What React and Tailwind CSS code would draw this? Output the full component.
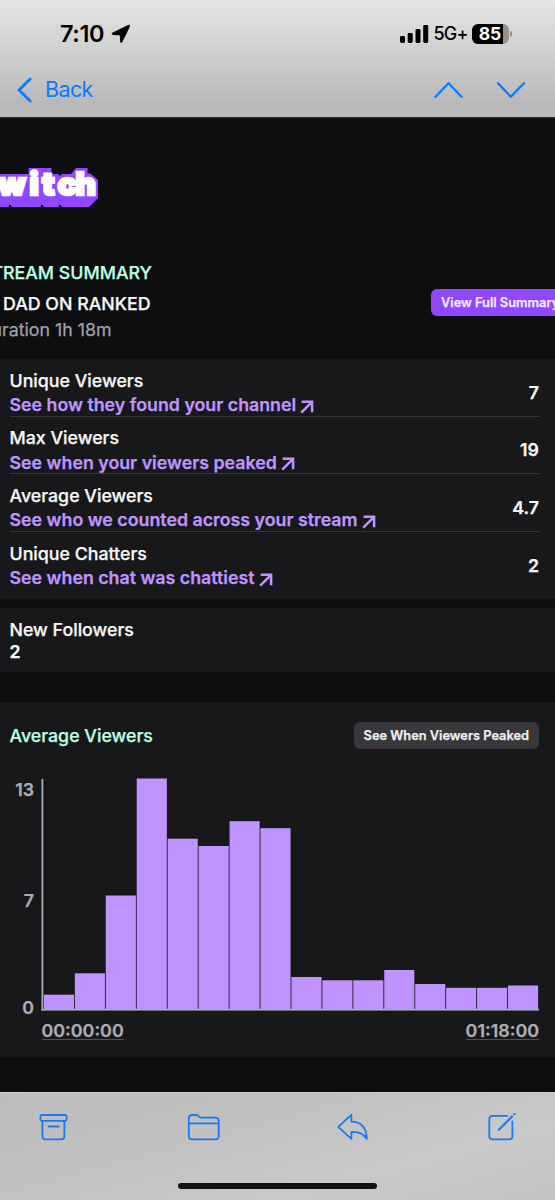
const stats = [
  {
    label: "Unique Viewers",
    link: "See how they found your channel",
    value: "7",
  },
  {
    label: "Max Viewers",
    link: "See when your viewers peaked",
    value: "19",
  },
  {
    label: "Average Viewers",
    link: "See who we counted across your stream",
    value: "4.7",
  },
  {
    label: "Unique Chatters",
    link: "See when chat was chattiest",
    value: "2",
  },
];

// Bar heights in pixels, one bar per interval of the stream
const bars = [
  14.3, 35.7, 113.5, 230.5, 170.3, 163, 187.8, 180.8, 32, 28.7, 28.7, 39, 25,
  21.2, 21.2, 23.5,
];
const BAR_STEP = 30.94;

const StatusBar = () => (
  <div className="flex h-[67px] items-center pl-[60px] pr-[43px] text-black">
    <span className="text-[23.5px] leading-none font-semibold tracking-[-0.4px]">
      7:10
    </span>
    <svg className="ml-[7px]" width="20" height="20" viewBox="0 0 19 19">
      <path
        d="M1.2 8.2 L16.2 .9 Q18.5 .2 17.9 2.5 L10.8 17 Q9.2 18.9 8.6 16.6 L8.4 11.2 Q8.3 10.6 7.8 10.6 L2 10.4 Q-.4 9.4 1.2 8.2Z"
        fill="currentColor"
      />
    </svg>

    <div className="ml-auto flex items-center">
      <svg width="29" height="18" viewBox="0 0 29 18" fill="currentColor">
        <rect x="0" y="11" width="5" height="7" rx="1.4" />
        <rect x="7.7" y="8" width="5" height="10" rx="1.4" />
        <rect x="15.5" y="4" width="5" height="14" rx="1.4" />
        <rect x="23.2" y="0" width="5" height="18" rx="1.4" />
      </svg>
      <span className="ml-[5px] w-[33px] text-[18px] leading-none font-medium tracking-[-0.8px] whitespace-nowrap">
        5G+
      </span>
      <div className="ml-[5px] flex items-center">
        <div className="flex h-[20px] w-[37px] items-center overflow-hidden rounded-[6px] bg-linear-to-r from-black from-[84%] to-[#929292] to-[84%]">
          <span className="w-full text-center text-[17.5px] leading-none font-bold text-white">
            85
          </span>
        </div>
        <div className="ml-[1.5px] h-[6px] w-[2px] rounded-r-full bg-[#929292]" />
      </div>
    </div>
  </div>
);

const NavBar = () => (
  <div className="flex h-[50px] items-center pl-[16px] pr-[29px] pb-[5px] text-[#0a7aff]">
    <svg
      width="17"
      height="26"
      viewBox="0 0 17 26"
      fill="none"
      stroke="currentColor"
      strokeWidth="2.8"
      strokeLinecap="round"
      strokeLinejoin="round"
    >
      <path d="M14.2 2 L3 13 L14.2 24" />
    </svg>
    <span className="ml-[12px] text-[21.5px] leading-none tracking-[-0.6px]">
      Back
    </span>
    <svg
      className="ml-auto"
      width="30"
      height="18"
      viewBox="0 0 30 18"
      fill="none"
      stroke="currentColor"
      strokeWidth="2.3"
      strokeLinecap="round"
      strokeLinejoin="round"
    >
      <path d="M2.5 15.8 L15.5 2.2 L28.5 15.8" />
    </svg>
    <svg
      className="ml-[33px]"
      width="30"
      height="18"
      viewBox="0 0 30 18"
      fill="none"
      stroke="currentColor"
      strokeWidth="2.3"
      strokeLinecap="round"
      strokeLinejoin="round"
    >
      <path d="M2 2.2 L14.8 15.8 L28 2.2" />
    </svg>
  </div>
);

const TwitchLogo = () => (
  <svg
    className="block overflow-hidden"
    width="100"
    height="42"
    viewBox="0 0 100 42"
  >
    <path
      d="M0 7 H28.5 V1 H51.5 V7 H58 L60 9 L62 7 H71 L76 1 H87.5 V6 L91 7 L98 13 V31 L89 40 H62.5 L59 37 V40 H44.5 L41 37 V40 H12.5 L9 37 V40 H0 Z"
      fill="#9147ff"
    />
    <text
      x="-20 -2 29.4 42 57.6 75.6"
      y="27.6"
      fill="#fff"
      stroke="#fff"
      strokeWidth="2.6"
      strokeLinejoin="miter"
      fontSize="31.5"
      fontWeight="900"
      fontFamily="Inter, sans-serif"
    >
      twitch
    </text>
  </svg>
);

const ArrowUpRight = () => (
  <svg
    className="mt-[2.5px] ml-[4px] shrink-0"
    width="14"
    height="14"
    viewBox="0 0 14 14"
    fill="none"
    stroke="currentColor"
    strokeWidth="2.5"
  >
    <path d="M1.6 1.8 H12.1 V12.3 M12.1 1.8 L1.2 12.7" />
  </svg>
);

const StreamHeader = () => (
  <section className="h-[101px] pt-[3px] leading-none whitespace-nowrap">
    <h1 className="flex h-[24px] w-[152px] items-center justify-end text-[17.8px] font-medium text-[#beffe3]">
      STREAM SUMMARY
    </h1>
    <div className="flex">
      <div>
        <h2 className="flex h-[37px] w-[150.5px] items-center justify-end text-[17.8px] font-medium text-[#f7f7f8]">
          DAD ON RANKED
        </h2>
        <p className="flex h-[15px] w-[111.5px] items-center justify-end text-[17.8px] text-[#a0a0aa]">
          Duration 1h 18m
        </p>
      </div>
      <button className="mt-[4px] ml-[280.5px] h-[27px] shrink-0 rounded-[6px] bg-[#9147ff] px-[10px] pt-px text-[12.8px] font-semibold text-[#f3eaff]">
        View Full Summary
      </button>
    </div>
  </section>
);

const StatRow = ({ label, link, value, last }) => (
  <div
    className={`flex h-[57.5px] items-center pt-[12px] ${
      last ? "" : "border-b border-[#36363b]"
    }`}
  >
    <div className="text-[17.8px] leading-[24.5px]">
      <div className="font-medium text-[#f7f7f8]">{label}</div>
      <a className="flex items-center font-semibold text-[#bf94ff]">
        {link}
        <ArrowUpRight />
      </a>
    </div>
    <span className="ml-auto text-[17.8px] font-semibold text-[#f7f7f8]">
      {value}
    </span>
  </div>
);

const ViewersChart = () => (
  <div className="flex">
    <div className="flex w-[34px] flex-col text-right text-[17.8px] leading-[20px] font-semibold text-[#adadb8]">
      <span className="mt-[2px]">13</span>
      <span className="mt-[91px]">7</span>
      <span className="mt-[87px]">0</span>
    </div>
    <div className="ml-[7px]">
      <svg className="block" width="499" height="234" viewBox="0 0 499 234">
        {bars.map((height, i) => (
          <rect
            key={i}
            x={2.9 + i * BAR_STEP}
            y={231 - height}
            width={30.1}
            height={height}
            fill="#bf94ff"
          />
        ))}
        <rect x="0.5" y="1" width="1.8" height="231.5" fill="#adadb8" />
        <rect x="0.5" y="230.8" width="497.5" height="1.8" fill="#adadb8" />
      </svg>
      <div className="flex w-[498px] justify-between pt-[11px] pl-[0.5px] text-[17.9px] leading-[16px] font-semibold text-[#adadb8]">
        <span className="border-b border-[#505058]">00:00:00</span>
        <span className="border-b border-[#505058]">01:18:00</span>
      </div>
    </div>
  </div>
);

const Toolbar = () => (
  <footer className="h-[108px] border-t border-[#d0d0d0] bg-[linear-gradient(165deg,#bcbcbd_0%,#c0c0c1_35%,#c9c9cb_70%,#c2c2c4_100%)]">
    <div className="flex h-[70px] items-center justify-between px-[38px] text-[#177cf0]">
      <svg
        width="31"
        height="30"
        viewBox="0 0 31 30"
        fill="none"
        stroke="currentColor"
        strokeWidth="1.8"
        strokeLinecap="round"
      >
        <rect x="2.4" y="2" width="26.2" height="5.8" rx="1.6" />
        <path d="M4.4 8 V23 Q4.4 26.4 7.8 26.4 H23 Q26.4 26.4 26.4 23 V8" />
        <path d="M10.5 13.4 H20.5" strokeWidth="2" />
      </svg>
      <svg
        width="33"
        height="30"
        viewBox="0 0 33 30"
        fill="none"
        stroke="currentColor"
        strokeWidth="1.8"
        strokeLinejoin="round"
      >
        <path d="M1.8 23 V5.2 Q1.8 2 5 2 H9 Q10.4 2 11.4 2.9 L12.4 3.8 Q13.3 4.7 14.7 4.7 H28.3 Q31.7 4.7 31.7 8 V23 Q31.7 26.4 28.3 26.4 H5.2 Q1.8 26.4 1.8 23Z M1.8 10.4 H31.7" />
      </svg>
      <svg
        width="32"
        height="30"
        viewBox="0 0 32 30"
        fill="none"
        stroke="currentColor"
        strokeWidth="1.8"
        strokeLinejoin="round"
      >
        <path d="M1.2 13.8 L14.4 1.8 V8.6 C24.5 8.6 29.8 15.5 29.8 26 C26.5 20.6 22.5 18.8 14.4 18.8 V25.8 Z" />
      </svg>
      <svg
        width="30"
        height="30"
        viewBox="0 0 30 30"
        fill="none"
        stroke="currentColor"
        strokeWidth="1.8"
        strokeLinecap="round"
      >
        <path d="M20.3 2.8 H5.7 Q2.3 2.8 2.3 6.2 V23 Q2.3 26.4 5.7 26.4 H22 Q25.4 26.4 25.4 23 V8.5" />
        <path d="M11.8 16.8 L25.2 3.4" strokeWidth="2.2" />
        <path d="M27.4 1.1 L27.6 .9" strokeWidth="2.2" />
      </svg>
    </div>
    <div className="mx-auto mt-[20px] h-[6px] w-[199px] rounded-full bg-[#111]" />
  </footer>
);

const App = () => {
  return (
    <div className="flex h-[1200px] w-[555px] flex-col overflow-hidden bg-[#0e0e10] font-[Inter,sans-serif]">
      <header className="h-[118px] shrink-0 border-b border-[#333] bg-linear-to-b from-[#e5e4e3] via-[#cdcdce] via-50% to-[#b8b8b9] to-90%">
        <StatusBar />
        <NavBar />
      </header>

      <main className="h-[974px] [-webkit-text-stroke-width:0.25px]">
        <div className="h-[140px] pt-[49px]">
          <TwitchLogo />
        </div>
        <StreamHeader />

        <section className="h-[240px] bg-[#18181b] pr-[16px] pl-[9.5px]">
          {stats.map((stat, i) => (
            <StatRow key={stat.label} {...stat} last={i === stats.length - 1} />
          ))}
        </section>

        <section className="mt-[9px] h-[64px] bg-[#18181b] px-[9.5px] pt-[11px] text-[17.8px] leading-[22px] text-[#f7f7f8]">
          <h3 className="font-medium">New Followers</h3>
          <p className="font-semibold">2</p>
        </section>

        <section className="mt-[30px] h-[355px] bg-[#18181b] pt-[20px]">
          <div className="mb-[29px] flex h-[27px] items-center justify-between pr-[16px] pl-[9.5px]">
            <h3 className="pt-px text-[17.8px] font-medium text-[#beffe3]">
              Average Viewers
            </h3>
            <button className="h-[27px] rounded-[6px] bg-[#38383c] px-[10px] text-[12.8px] font-semibold text-[#efeff1]">
              See When Viewers Peaked
            </button>
          </div>
          <ViewersChart />
        </section>
      </main>

      <Toolbar />
    </div>
  );
};

export default App;
